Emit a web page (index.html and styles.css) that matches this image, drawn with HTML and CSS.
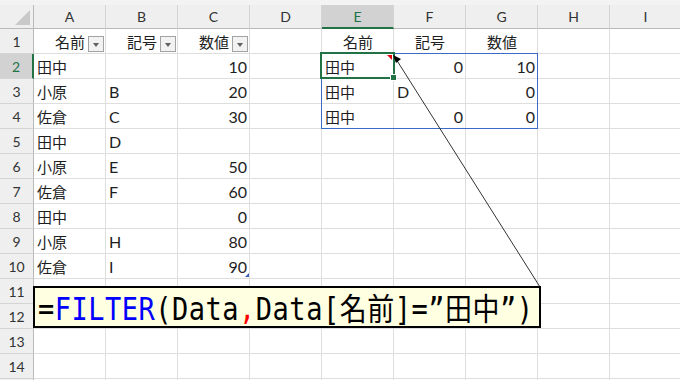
FILE: index.html
```html
<!DOCTYPE html>
<html lang="ja">
<head>
<meta charset="utf-8">
<link rel="stylesheet" href="styles.css">
</head>
<body>
<div class="sheet">
  <div class="top"></div>
  <div class="row head">
    <div class="corner"><span class="tri"></span></div>
    <div class="ch">A</div><div class="ch">B</div><div class="ch">C</div><div class="ch">D</div>
    <div class="ch sel">E</div><div class="ch">F</div><div class="ch">G</div><div class="ch">H</div><div class="ch">I</div>
  </div>
  <div class="row">
    <div class="rh">1</div>
    <div class="c f"><span class="jp">名前</span><span class="fb"></span></div>
    <div class="c f"><span class="jp">記号</span><span class="fb"></span></div>
    <div class="c f"><span class="jp">数値</span><span class="fb"></span></div>
    <div class="c"></div>
    <div class="c m"><span class="jp">名前</span></div>
    <div class="c m"><span class="jp">記号</span></div>
    <div class="c m"><span class="jp">数値</span></div>
    <div class="c"></div><div class="c"></div>
  </div>
  <div class="row">
    <div class="rh sel">2</div>
    <div class="c"><span class="jp">田中</span></div><div class="c"></div><div class="c r">10</div><div class="c"></div>
    <div class="c"><span class="jp">田中</span></div><div class="c r">0</div><div class="c r">10</div>
    <div class="c"></div><div class="c"></div>
  </div>
  <div class="row">
    <div class="rh">3</div>
    <div class="c"><span class="jp">小原</span></div><div class="c">B</div><div class="c r">20</div><div class="c"></div>
    <div class="c"><span class="jp">田中</span></div><div class="c">D</div><div class="c r">0</div>
    <div class="c"></div><div class="c"></div>
  </div>
  <div class="row">
    <div class="rh">4</div>
    <div class="c"><span class="jp">佐倉</span></div><div class="c">C</div><div class="c r">30</div><div class="c"></div>
    <div class="c"><span class="jp">田中</span></div><div class="c r">0</div><div class="c r">0</div>
    <div class="c"></div><div class="c"></div>
  </div>
  <div class="row">
    <div class="rh">5</div>
    <div class="c"><span class="jp">田中</span></div><div class="c">D</div><div class="c r"></div><div class="c"></div>
    <div class="c"></div><div class="c"></div><div class="c"></div><div class="c"></div><div class="c"></div>
  </div>
  <div class="row">
    <div class="rh">6</div>
    <div class="c"><span class="jp">小原</span></div><div class="c">E</div><div class="c r">50</div><div class="c"></div>
    <div class="c"></div><div class="c"></div><div class="c"></div><div class="c"></div><div class="c"></div>
  </div>
  <div class="row">
    <div class="rh">7</div>
    <div class="c"><span class="jp">佐倉</span></div><div class="c">F</div><div class="c r">60</div><div class="c"></div>
    <div class="c"></div><div class="c"></div><div class="c"></div><div class="c"></div><div class="c"></div>
  </div>
  <div class="row">
    <div class="rh">8</div>
    <div class="c"><span class="jp">田中</span></div><div class="c"></div><div class="c r">0</div><div class="c"></div>
    <div class="c"></div><div class="c"></div><div class="c"></div><div class="c"></div><div class="c"></div>
  </div>
  <div class="row">
    <div class="rh">9</div>
    <div class="c"><span class="jp">小原</span></div><div class="c">H</div><div class="c r">80</div><div class="c"></div>
    <div class="c"></div><div class="c"></div><div class="c"></div><div class="c"></div><div class="c"></div>
  </div>
  <div class="row">
    <div class="rh">10</div>
    <div class="c"><span class="jp">佐倉</span></div><div class="c">I</div><div class="c r">90</div><div class="c"></div>
    <div class="c"></div><div class="c"></div><div class="c"></div><div class="c"></div><div class="c"></div>
  </div>
  <div class="row">
    <div class="rh">11</div>
    <div class="c"></div><div class="c"></div><div class="c"></div><div class="c"></div><div class="c"></div><div class="c"></div><div class="c"></div><div class="c"></div><div class="c"></div>
  </div>
  <div class="row">
    <div class="rh">12</div>
    <div class="c"></div><div class="c"></div><div class="c"></div><div class="c"></div><div class="c"></div><div class="c"></div><div class="c"></div><div class="c"></div><div class="c"></div>
  </div>
  <div class="row">
    <div class="rh">13</div>
    <div class="c"></div><div class="c"></div><div class="c"></div><div class="c"></div><div class="c"></div><div class="c"></div><div class="c"></div><div class="c"></div><div class="c"></div>
  </div>
  <div class="row">
    <div class="rh">14</div>
    <div class="c"></div><div class="c"></div><div class="c"></div><div class="c"></div><div class="c"></div><div class="c"></div><div class="c"></div><div class="c"></div><div class="c"></div>
  </div>
  <div class="row last">
    <div class="rh"></div>
    <div class="c"></div><div class="c"></div><div class="c"></div><div class="c"></div><div class="c"></div><div class="c"></div><div class="c"></div><div class="c"></div><div class="c"></div>
  </div>
</div>

<div class="spill"></div>
<div class="active"><span class="handle"></span></div>

<svg class="ov" width="680" height="380" viewBox="0 0 680 380">
  <line x1="540" y1="287" x2="396" y2="59" stroke="#333" stroke-width="1"/>
  <polygon points="393,55 401,59 396,63" fill="#000"/>
  <polygon points="387,55 392,55 392,60" fill="#e3000f"/>
  <polygon points="245,277 249,273 249,277" fill="#3b5fb8"/>
</svg>

<div class="formula"><span class="ft"><span class="k">=</span><span class="fn">FILTER</span>(Data<span class="comma">,</span>Data[名前]=”田中”)</span></div>
</body>
</html>
```
FILE: styles.css
```css
html, body {
  margin: 0;
  padding: 0;
}
body {
  width: 680px;
  height: 380px;
  overflow: hidden;
  background: #fff;
  position: relative;
  font-family: Lato, "Noto Sans CJK JP", sans-serif;
  color: #1e1e1e;
}
.sheet {
  width: 680px;
  height: 380px;
  overflow: hidden;
}
.top {
  height: 5px;
  background: #f3f3f3;
}
.row {
  display: flex;
  height: 25px;
}
.row.head {
  height: 24px;
}
.row.last {
  height: 2px;
}
.corner {
  width: 34px;
  flex: none;
  box-sizing: border-box;
  background: #efefef;
  border-right: 1px solid #b9b9b9;
  border-bottom: 1px solid #b9b9b9;
  position: relative;
}
.tri {
  position: absolute;
  right: 3px;
  bottom: 3px;
  width: 0;
  height: 0;
  border-left: 15px solid transparent;
  border-bottom: 15px solid #c9c9c9;
}
.ch {
  width: 72px;
  flex: none;
  box-sizing: border-box;
  background: #efefef;
  border-right: 1px solid #d4d4d4;
  border-bottom: 1px solid #b9b9b9;
  display: flex;
  align-items: center;
  justify-content: center;
  font-size: 14px;
  color: #333;
}
.ch.sel {
  background: #d2d2d2;
  color: #217346;
  border-bottom: 2px solid #217346;
}
.rh {
  width: 34px;
  flex: none;
  box-sizing: border-box;
  background: #efefef;
  border-right: 1px solid #b9b9b9;
  border-bottom: 1px solid #d4d4d4;
  display: flex;
  align-items: center;
  justify-content: center;
  font-size: 14px;
  color: #333;
}
.rh.sel {
  background: #d2d2d2;
  color: #217346;
  border-right: 2px solid #217346;
}
.c {
  width: 72px;
  flex: none;
  box-sizing: border-box;
  border-right: 1px solid #dedede;
  border-bottom: 1px solid #dedede;
  display: flex;
  align-items: center;
  padding: 0 2px 0 3px;
  font-size: 16px;
  white-space: nowrap;
}
.row.last .c, .row.last .rh {
  border-bottom: none;
}
.c.r {
  justify-content: flex-end;
}
.c.m {
  justify-content: center;
}
.c.f {
  justify-content: flex-end;
  padding-right: 1px;
}
.jp {
  font-family: "Noto Sans CJK JP", sans-serif;
  font-size: 15px;
}
.fb {
  width: 16px;
  height: 16px;
  flex: none;
  box-sizing: border-box;
  margin-left: 3px;
  align-self: flex-end;
  margin-bottom: 1px;
  border: 1px solid #a3a3a3;
  background: #f2f2f2;
  position: relative;
}
.fb::after {
  content: "";
  position: absolute;
  left: 4px;
  top: 6px;
  width: 0;
  height: 0;
  border-left: 3px solid transparent;
  border-right: 3px solid transparent;
  border-top: 4px solid #5f5f5f;
}
.spill {
  position: absolute;
  left: 321px;
  top: 53px;
  width: 217px;
  height: 76px;
  box-sizing: border-box;
  border: 1px solid #3a6bc6;
}
.active {
  position: absolute;
  left: 320px;
  top: 52px;
  width: 75px;
  height: 27px;
  box-sizing: border-box;
  border: 2px solid #217346;
}
.handle {
  position: absolute;
  right: -4px;
  bottom: -4px;
  width: 5px;
  height: 5px;
  background: #217346;
  border: 1px solid #fff;
}
.ov {
  position: absolute;
  left: 0;
  top: 0;
  pointer-events: none;
}
.formula {
  position: absolute;
  left: 33px;
  top: 286px;
  width: 508px;
  height: 42px;
  box-sizing: border-box;
  border: 2px solid #000;
  background: #ffffe1;
  padding-left: 3px;
  display: flex;
  align-items: center;
  font-family: "DejaVu Sans Mono", "Noto Sans CJK JP", monospace;
  font-size: 27px;
  color: #000;
  white-space: nowrap;
}
.ft {
  display: inline-block;
  letter-spacing: 0.5px;
  transform: scaleY(1.15);
  transform-origin: 50% 55%;
}
.fn {
  color: #0000ff;
}
.comma {
  color: #ff0000;
}
```
